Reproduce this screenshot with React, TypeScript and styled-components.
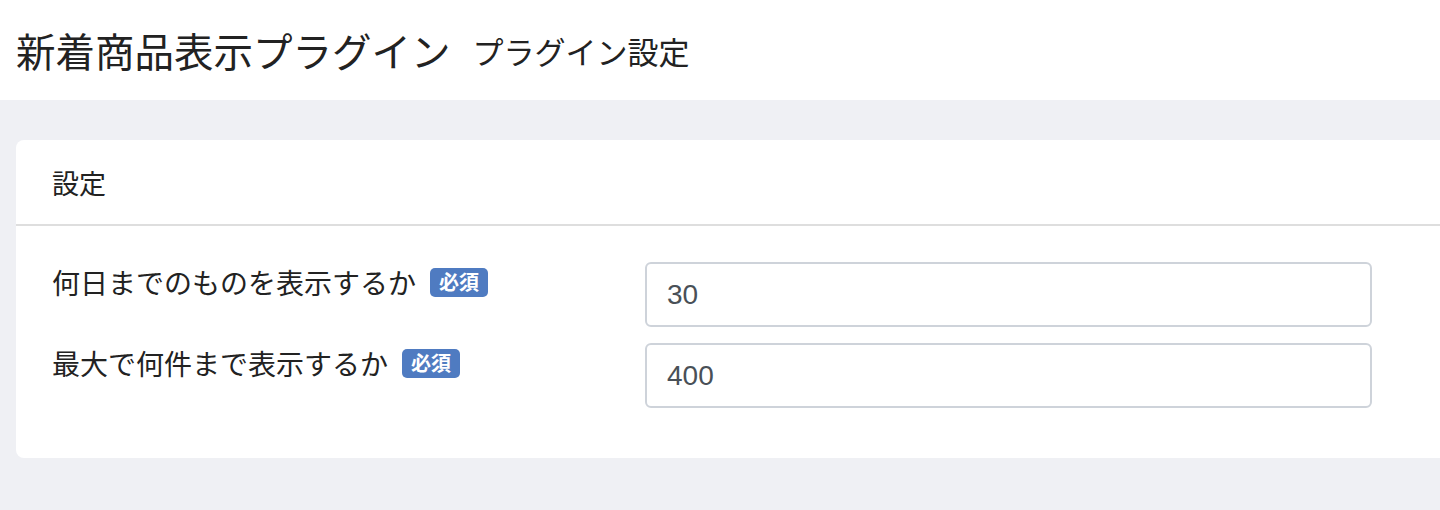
import React from "react";
import styled, { createGlobalStyle } from "styled-components";

const GlobalStyle = createGlobalStyle`
  html, body {
    margin: 0;
    padding: 0;
    background: #eff0f4;
    overflow: hidden;
  }
  body {
    font-family: "Noto Sans CJK JP", "Noto Sans", sans-serif;
    color: #222;
  }
`;

const Page = styled.div`
  width: 1440px;
  height: 510px;
  overflow: hidden;
  background: #eff0f4;
`;

const Header = styled.header`
  height: 100px;
  background: #fff;
  display: flex;
  align-items: center;
  gap: 22px;
  padding: 0 16px;
  box-sizing: border-box;
`;

const Title = styled.h1`
  margin: 0;
  font-size: 39.5px;
  font-weight: 400;
  line-height: 1;
  color: #222;
  white-space: nowrap;
`;

const SubTitle = styled.span`
  font-size: 31px;
  line-height: 1;
  color: #222;
  white-space: nowrap;
`;

const Content = styled.main`
  padding: 40px 0 0 16px;
`;

const Card = styled.section`
  width: 1500px;
  background: #fff;
  border-radius: 8px;
`;

const CardHeader = styled.div`
  height: 84px;
  display: flex;
  align-items: center;
  padding: 0 36px;
  border-bottom: 2px solid #dedede;
  font-size: 27px;
  color: #222;
`;

const CardBody = styled.div`
  padding: 36px 36px 50px;
  display: flex;
  flex-direction: column;
  gap: 16px;
`;

const Row = styled.div`
  display: grid;
  grid-template-columns: 593px 727px;
  align-items: start;
`;

const Label = styled.div`
  display: flex;
  align-items: center;
  gap: 14px;
  padding-top: 0;
  font-size: 28px;
  line-height: 40px;
  color: #222;
  white-space: nowrap;
`;

const Badge = styled.span`
  display: inline-flex;
  align-items: center;
  justify-content: center;
  height: 29px;
  padding: 0 9px;
  border-radius: 5px;
  background: #4f7bc1;
  color: #fff;
  font-size: 20px;
  font-weight: 700;
  line-height: 1;
`;

const Input = styled.input`
  box-sizing: border-box;
  width: 727px;
  height: 65px;
  padding: 0 20px;
  border: 2px solid #ced3da;
  border-radius: 6px;
  font-family: "Liberation Sans", Arial, sans-serif;
  font-size: 28px;
  color: #495057;
  background: #fff;
  outline: none;
`;

const fields = [
  { label: "何日までのものを表示するか", value: "30" },
  { label: "最大で何件まで表示するか", value: "400" },
];

export default function App() {
  return (
    <Page>
      <GlobalStyle />
      <Header>
        <Title>新着商品表示プラグイン</Title>
        <SubTitle>プラグイン設定</SubTitle>
      </Header>
      <Content>
        <Card>
          <CardHeader>設定</CardHeader>
          <CardBody>
            {fields.map((f) => (
              <Row key={f.label}>
                <Label>
                  {f.label}
                  <Badge>必須</Badge>
                </Label>
                <Input defaultValue={f.value} />
              </Row>
            ))}
          </CardBody>
        </Card>
      </Content>
    </Page>
  );
}
